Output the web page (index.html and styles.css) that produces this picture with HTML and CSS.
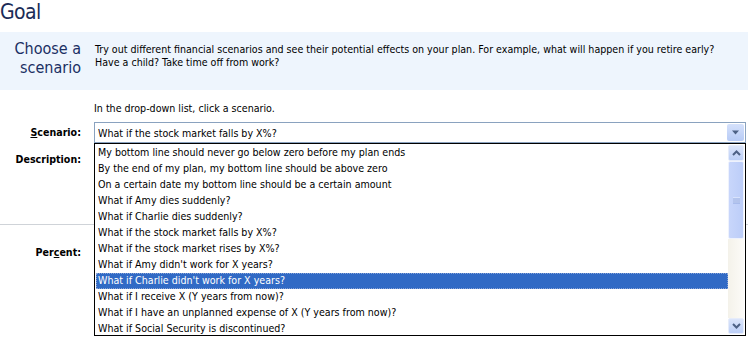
FILE: index.html
```html
<!DOCTYPE html>
<html lang="en">
<head>
  <meta charset="UTF-8">
  <title>Goal</title>
  <link rel="stylesheet" href="styles.css">
</head>
<body>
  <h1 class="title">Goal</h1>

  <!-- Intro band -->
  <div class="intro">
    <div class="intro-head">Choose a scenario</div>
    <div class="intro-text">Try out different financial scenarios and see their potential effects on your plan. For example, what will happen if you retire early? Have a child? Take time off from work?</div>
  </div>

  <div class="form">
    <div class="row hint-row">
      <div class="label"></div>
      <div class="field">In the drop-down list, click a scenario.</div>
    </div>

    <div class="row scenario-row">
      <div class="label"><u>S</u>cenario:</div>
      <div class="field">
        <div class="combo">
          <span class="combo-text">What if the stock market falls by X%?</span>
          <span class="combo-btn">
            <svg width="9" height="5" viewBox="0 0 9 5"><path d="M1 0.5h7L4.5 4.5z" fill="#4d6185"/></svg>
          </span>
        </div>
      </div>
    </div>

    <div class="row desc-row">
      <div class="label">Description:</div>
      <div class="field"></div>
    </div>

    <div class="rule"></div>

    <div class="row percent-row">
      <div class="label">Per<u>c</u>ent:</div>
      <div class="field"><div class="input"></div></div>
    </div>

    <!-- open drop-down list -->
    <div class="dropdown">
      <ul class="options">
        <li>My bottom line should never go below zero before my plan ends</li>
        <li>By the end of my plan, my bottom line should be above zero</li>
        <li>On a certain date my bottom line should be a certain amount</li>
        <li>What if Amy dies suddenly?</li>
        <li>What if Charlie dies suddenly?</li>
        <li>What if the stock market falls by X%?</li>
        <li>What if the stock market rises by X%?</li>
        <li>What if Amy didn't work for X years?</li>
        <li class="selected">What if Charlie didn't work for X years?</li>
        <li>What if I receive X (Y years from now)?</li>
        <li>What if I have an unplanned expense of X (Y years from now)?</li>
        <li>What if Social Security is discontinued?</li>
      </ul>
      <div class="scrollbar">
        <div class="sb-btn">
          <svg width="9" height="6" viewBox="0 0 9 6"><path d="M1 5L4.5 1.5L8 5" fill="none" stroke="#4d6185" stroke-width="2"/></svg>
        </div>
        <div class="sb-thumb">
          <svg width="7" height="7" viewBox="0 0 7 7"><path d="M0 1h7M0 3h7M0 5h7" stroke="#eef3ff" stroke-width="1"/><path d="M0 2h7M0 4h7M0 6h7" stroke="#8fa6dd" stroke-width="1"/></svg>
        </div>
        <div class="sb-track"></div>
        <div class="sb-btn">
          <svg width="9" height="6" viewBox="0 0 9 6"><path d="M1 1L4.5 4.5L8 1" fill="none" stroke="#4d6185" stroke-width="2"/></svg>
        </div>
      </div>
    </div>
  </div>
</body>
</html>
```

FILE: styles.css
```css
body {
  margin: 0;
  background: white;
  font-family: "DejaVu Sans Condensed", "DejaVu Sans", sans-serif;
  font-size: 10.6px;
  color: black;
}

.title {
  margin: 0;
  height: 32px;
  font-size: 21px;
  font-weight: normal;
  line-height: 25px;
  color: #1b2c57;
  letter-spacing: -0.6px;
}

.intro {
  display: flex;
  background: #eef5fd;
  height: 58px;
  padding-top: 7px;
  box-sizing: border-box;
}

.intro-head {
  width: 81px;
  text-align: right;
  font-size: 16px;
  line-height: 19px;
  color: #1a2f63;
  flex-shrink: 0;
}

.intro-text {
  margin-left: 14px;
  margin-top: 4px;
  line-height: 13px;
  padding-right: 20px;
}

.form {
  position: relative;
  height: 253px;
  padding-top: 11px;
  box-sizing: border-box;
}

.row {
  display: flex;
}

.label {
  width: 81px;
  flex-shrink: 0;
  text-align: right;
  font-weight: bold;
  line-height: 14px;
}

.field {
  flex: 1;
  margin-left: 13px;
  line-height: 14px;
}

.scenario-row {
  margin-top: 7px;
}

.scenario-row .label {
  padding-top: 3px;
}

.combo {
  display: flex;
  align-items: center;
  height: 21px;
  margin-right: 2px;
  border: 1px solid #8aa2bf;
  box-sizing: border-box;
  padding: 1px 1px 1px 3px;
}

.combo-text {
  flex: 1;
}

.combo-btn {
  width: 17px;
  height: 17px;
  display: flex;
  justify-content: center;
  align-items: center;
  background: linear-gradient(#d5e1fb, #b7cbf6);
  border-radius: 2px;
}

.desc-row {
  margin-top: 9px;
}

.rule {
  margin-top: 58px;
  height: 1px;
  background: #cfd3d8;
}

.percent-row {
  margin-top: 20px;
}

.input {
  width: 120px;
  height: 18px;
  border-left: 2px solid #555;
  margin-top: -3px;
}

.dropdown {
  position: absolute;
  top: 53px;
  left: 94px;
  right: 2px;
  height: 193px;
  border: 1px solid black;
  box-sizing: border-box;
  background: white;
  display: flex;
  padding: 1px;
}

.options {
  list-style: none;
  margin: 0;
  padding: 0;
  flex: 1;
}

.options li {
  height: 16px;
  line-height: 15px;
  padding-left: 2px;
  white-space: nowrap;
}

.options li.selected {
  background: #316ac5;
  color: white;
  outline: 1px dotted #8aa4d6;
  outline-offset: -1px;
}

.scrollbar {
  width: 16px;
  display: flex;
  flex-direction: column;
}

.sb-btn {
  height: 16px;
  display: flex;
  justify-content: center;
  align-items: center;
  background: linear-gradient(#dbe5fb, #bccff7);
  border: 1px solid #e6ecfa;
  box-sizing: border-box;
  border-radius: 2px;
}

.sb-thumb {
  height: 78px;
  display: flex;
  justify-content: center;
  align-items: center;
  background: linear-gradient(90deg, #c8d6fb, #bccdf8);
  border: 1px solid #eef2fd;
  box-sizing: border-box;
  border-radius: 2px;
}

.sb-track {
  flex: 1;
  background: linear-gradient(90deg, #f4f2ea, #fcfbf8);
}
```
